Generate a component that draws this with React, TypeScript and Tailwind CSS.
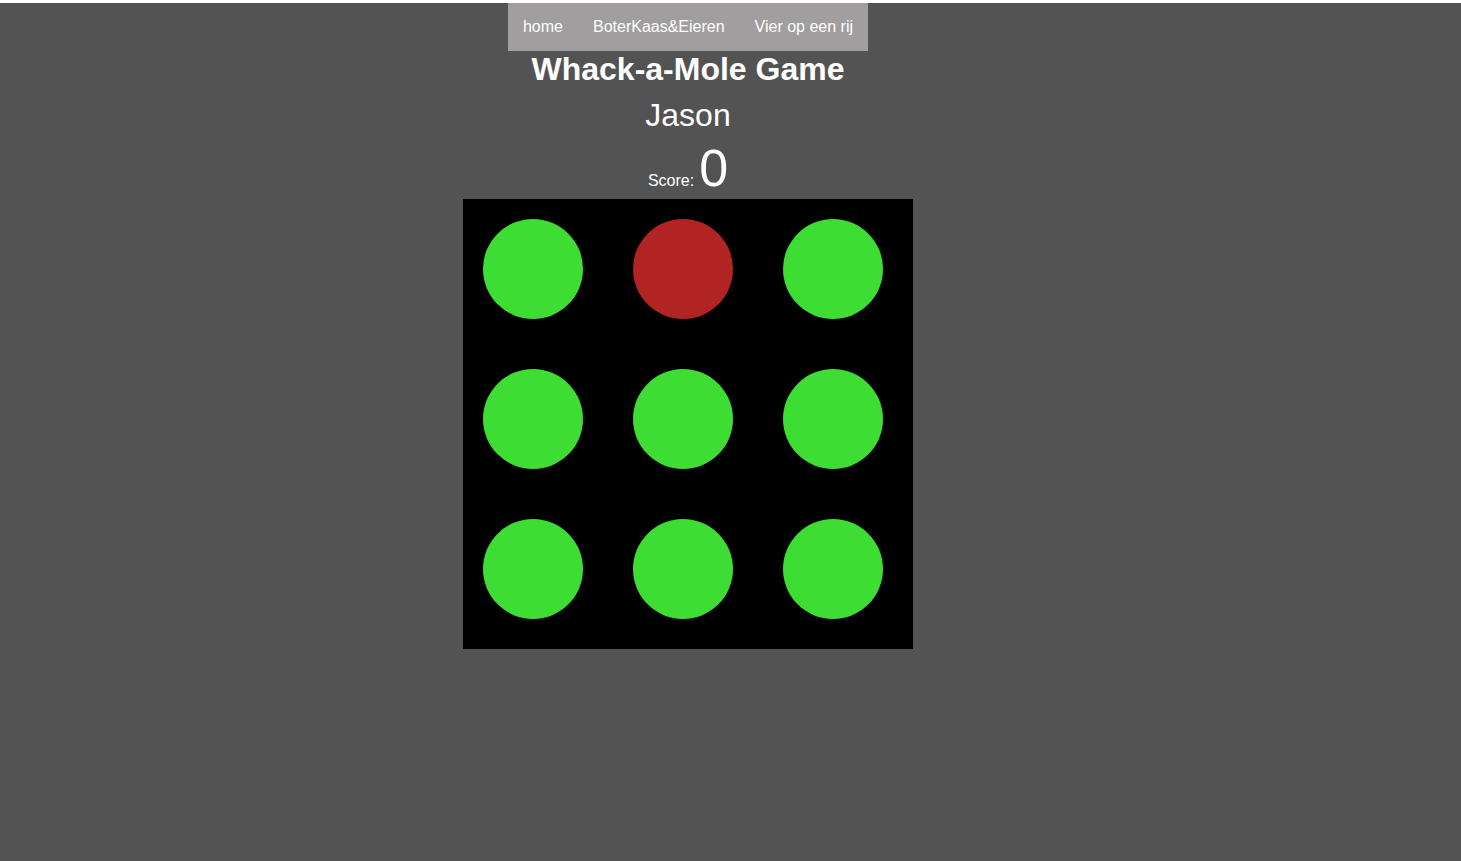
import React from "react";

export default function App() {
  const cells = [0, 1, 2, 3, 4, 5, 6, 7, 8];
  return (
    <div className="min-h-[861px] w-full bg-[#535353] font-['Liberation_Sans',Arial,sans-serif] text-white">
      <div className="h-[3px] w-full bg-white" />
      <div className="flex w-[1376px] flex-col items-center">
        <nav className="flex bg-[#a09e9e]">
          <a className="px-[15px] py-[14px] text-[16px] leading-[19px] text-white">home</a>
          <a className="px-[15px] py-[14px] text-[16px] leading-[19px] text-white">BoterKaas&amp;Eieren</a>
          <a className="px-[15px] py-[14px] text-[16px] leading-[20px] text-white">Vier op een rij</a>
        </nav>
        <h1 className="mt-0 text-[32px] font-bold leading-[37px]">Whack-a-Mole Game</h1>
        <div className="mt-[9px] text-[32px] leading-[37px]">Jason</div>
        <div className="mt-[8px] h-[52px] leading-[52px]">
          <span className="text-[16px]">Score:</span>
          <span className="ml-[5px] text-[52px]">0</span>
        </div>
        <div className="mt-[5px] grid h-[450px] w-[450px] grid-cols-3 bg-black">
          {cells.map((i) => (
            <div key={i} className="pl-[20px] pt-[20px]">
              <div
                className={
                  "h-[100px] w-[100px] rounded-full " +
                  (i === 1 ? "bg-[#b22424]" : "bg-[#3ddd33]")
                }
              />
            </div>
          ))}
        </div>
      </div>
    </div>
  );
}
